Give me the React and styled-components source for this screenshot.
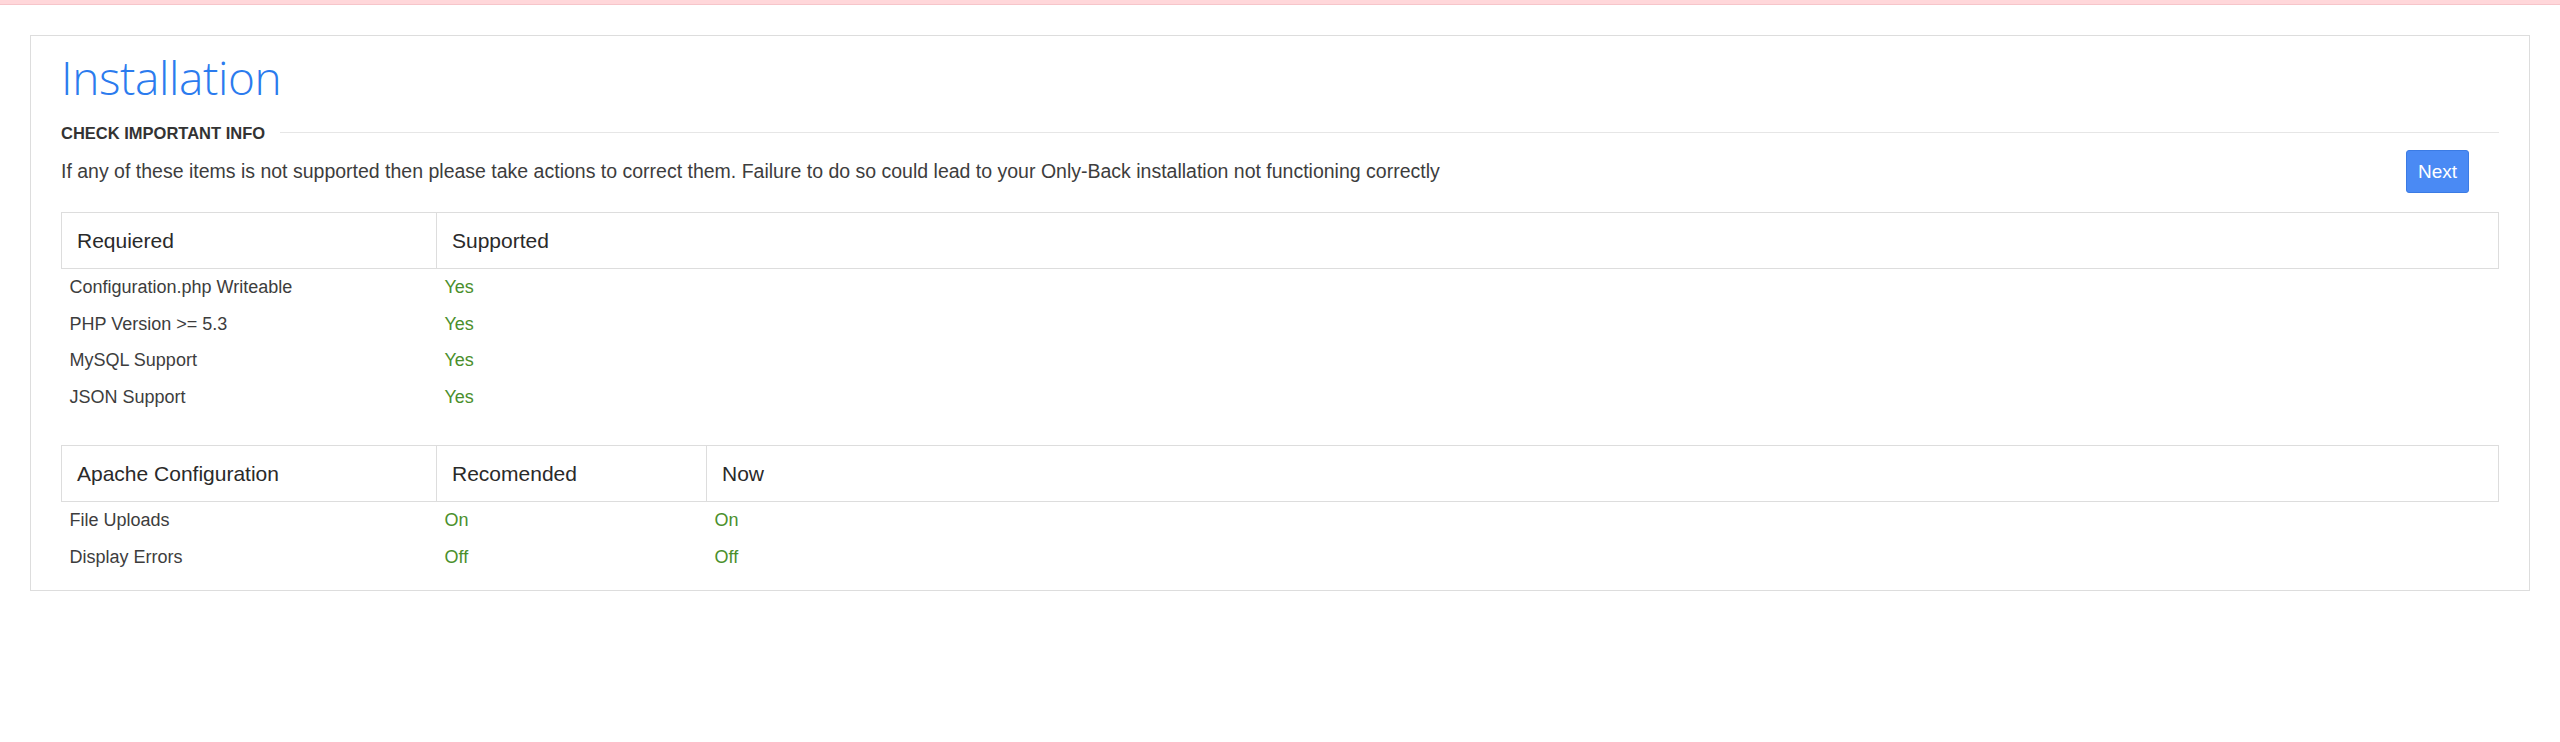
import React from "react";
import styled, { createGlobalStyle } from "styled-components";

const GlobalStyle = createGlobalStyle`
  html, body { margin: 0; padding: 0; background: #ffffff; }
  body { font-family: "Liberation Sans", Arial, sans-serif; color: #333; }
`;

const TopBar = styled.div`
  height: 4px;
  background: #ffd7da;
  border-bottom: 1px solid #f6c5ca;
`;

const Container = styled.div`
  padding: 30px 30px 0;
`;

const Panel = styled.section`
  border: 1px solid #dddddd;
  padding: 15px 30px 15px;
  background: #fff;
`;

const Title = styled.h1`
  margin: 0;
  font-family: "Open Sans", sans-serif;
  font-weight: 300;
  font-size: 46px;
  letter-spacing: -0.4px;
  line-height: 52px;
  color: #2b7bee;
`;

const SectionHeader = styled.div`
  display: flex;
  align-items: center;
  margin-top: 20px;
  height: 20px;
`;

const SectionLabel = styled.span`
  font-size: 16.5px;
  font-weight: 700;
  line-height: 20px;
  color: #333;
  text-transform: uppercase;
  white-space: nowrap;
`;

const Rule = styled.div`
  flex: 1;
  height: 1px;
  margin-left: 15px;
  margin-top: -2px;
  background: #e6e6e6;
`;

const InfoRow = styled.div`
  display: flex;
  align-items: center;
  justify-content: space-between;
  margin-top: 7px;
  margin-bottom: 19px;
`;

const InfoText = styled.p`
  margin: 0;
  font-size: 19.5px;
  line-height: 27px;
  color: #3d3d3d;
`;

const NextButton = styled.button`
  margin-right: 30px;
  height: 43px;
  padding: 0 11px;
  font-family: "Liberation Sans", Arial, sans-serif;
  font-size: 19px;
  color: #fff;
  background: #4a8af4;
  border: 1px solid #3b7be4;
  border-radius: 3px;
  cursor: pointer;
`;

const Table = styled.table`
  width: 100%;
  border-collapse: collapse;
  table-layout: fixed;
  margin-bottom: ${(p) => (p.$last ? "0" : "30px")};
`;

const Col = styled.col`
  width: ${(p) => (p.$width ? `${p.$width}px` : "auto")};
`;

const HeadCell = styled.th`
  text-align: left;
  font-weight: 400;
  font-size: 21px;
  line-height: 31px;
  padding: 12px 15px;
  color: #2a2a2a;
  border: 1px solid #dddddd;
`;

const Cell = styled.td`
  font-size: 18px;
  line-height: 26.5px;
  padding: 5px 8px;
  color: ${(p) => (p.$ok ? "#4a8f2c" : "#3d3d3d")};
`;

const requirements = [
  ["Configuration.php Writeable", "Yes"],
  ["PHP Version >= 5.3", "Yes"],
  ["MySQL Support", "Yes"],
  ["JSON Support", "Yes"],
];

const apache = [
  ["File Uploads", "On", "On"],
  ["Display Errors", "Off", "Off"],
];

export default function App() {
  return (
    <>
      <GlobalStyle />
      <TopBar />
      <Container>
        <Panel>
          <Title>Installation</Title>
          <SectionHeader>
            <SectionLabel>Check important info</SectionLabel>
            <Rule />
          </SectionHeader>
          <InfoRow>
            <InfoText>
              If any of these items is not supported then please take actions to correct them. Failure to do so could lead to your Only-Back installation not functioning correctly
            </InfoText>
            <NextButton>Next</NextButton>
          </InfoRow>

          <Table>
            <colgroup>
              <Col $width={375} />
              <Col />
            </colgroup>
            <thead>
              <tr>
                <HeadCell>Requiered</HeadCell>
                <HeadCell>Supported</HeadCell>
              </tr>
            </thead>
            <tbody>
              {requirements.map(([name, val]) => (
                <tr key={name}>
                  <Cell>{name}</Cell>
                  <Cell $ok>{val}</Cell>
                </tr>
              ))}
            </tbody>
          </Table>

          <Table $last>
            <colgroup>
              <Col $width={375} />
              <Col $width={270} />
              <Col />
            </colgroup>
            <thead>
              <tr>
                <HeadCell>Apache Configuration</HeadCell>
                <HeadCell>Recomended</HeadCell>
                <HeadCell>Now</HeadCell>
              </tr>
            </thead>
            <tbody>
              {apache.map(([name, rec, now]) => (
                <tr key={name}>
                  <Cell>{name}</Cell>
                  <Cell $ok>{rec}</Cell>
                  <Cell $ok>{now}</Cell>
                </tr>
              ))}
            </tbody>
          </Table>
        </Panel>
      </Container>
    </>
  );
}
